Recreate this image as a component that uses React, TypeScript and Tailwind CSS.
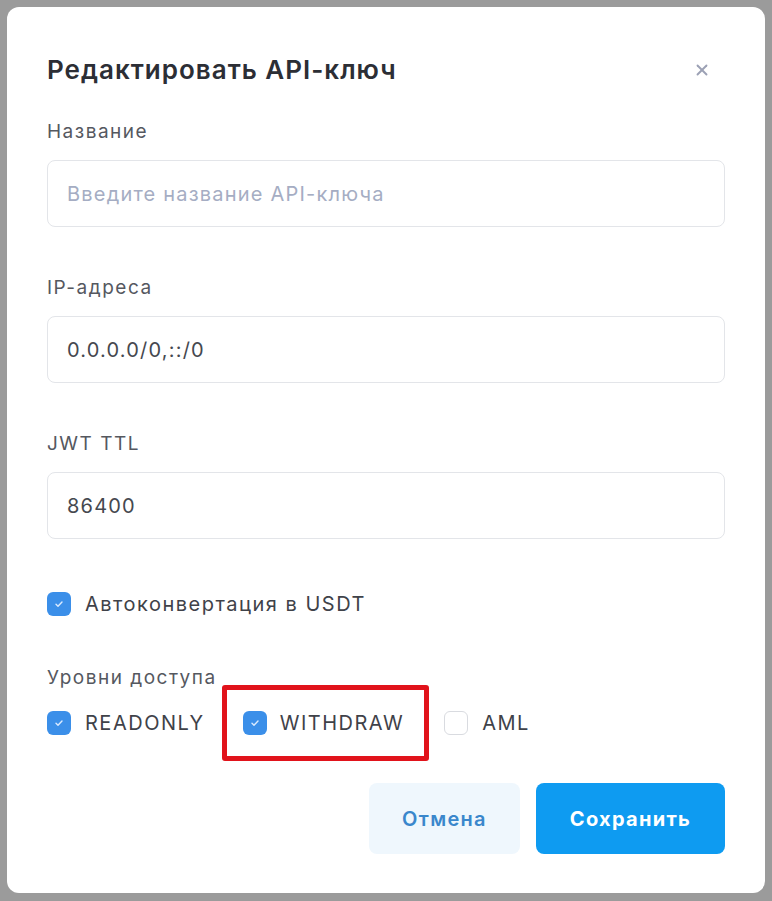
import { X } from 'lucide-react';

function Check({ checked }: { checked: boolean }) {
  return checked ? (
    <span className="flex h-6 w-6 shrink-0 items-center justify-center rounded-[6px] bg-[#3b8fe9]">
      <svg width="12" height="12" viewBox="0 0 12 12" fill="none">
        <path d="M3 6.3l2 2 4-4.3" stroke="#dbeafe" strokeWidth="1.4" strokeLinecap="round" strokeLinejoin="round" />
      </svg>
    </span>
  ) : (
    <span className="h-6 w-6 shrink-0 rounded-[6px] border border-[#d9dbe0] bg-white" />
  );
}

function Field({ label, value, placeholder }: { label: string; value?: string; placeholder?: string }) {
  return (
    <div className="flex flex-col gap-4">
      <label className="text-[19px] leading-6 tracking-[1.5px] text-[#55585f]">{label}</label>
      <input
        defaultValue={value}
        placeholder={placeholder}
        className="h-[67px] w-full rounded-[8px] border border-[#e3e5e9] bg-white px-[19px] text-[20px] tracking-[1.2px] text-[#45484f] placeholder:text-[#a5adc3] focus:outline-none"
      />
    </div>
  );
}

export default function App() {
  return (
    <div className="min-h-[901px] bg-[#9b9b9b] p-[7px] font-['Inter',sans-serif]">
      <div className="flex h-[886px] w-[758px] flex-col rounded-[12px] bg-white px-10 pt-[47px] pb-[39px]">
        <div className="flex items-center justify-between">
          <h2 className="text-[26px] font-semibold leading-8 tracking-[1px] text-[#2c2e35]">Редактировать API-ключ</h2>
          <X className="mr-[14px] h-[18px] w-[18px] text-[#9ca1b5]" strokeWidth={2.5} />
        </div>

        <div className="mt-[34px] flex flex-col gap-[49px]">
          <Field label="Название" placeholder="Введите название API-ключа" />
          <Field label="IP-адреса" value="0.0.0.0/0,::/0" />
          <Field label="JWT TTL" value="86400" />
        </div>

        <div className="mt-[53px] flex items-center gap-[14px]">
          <Check checked />
          <span className="text-[20px] leading-6 tracking-[1.5px] text-[#3f4249]">Автоконвертация в USDT</span>
        </div>

        <div className="mt-[50px] text-[19px] leading-6 tracking-[1.5px] text-[#55585f]">Уровни доступа</div>

        <div className="mt-[21px] flex items-center">
          <div className="flex items-center gap-[14px]">
            <Check checked />
            <span className="text-[20px] leading-6 tracking-[1.5px] text-[#3f4249]">READONLY</span>
          </div>
          <div className="-my-[26px] ml-[17px] flex items-center gap-[13px] rounded-[3px] border-[5px] border-[#e1131b] py-[21px] pr-[20px] pl-[16px]">
            <Check checked />
            <span className="text-[20px] leading-6 tracking-[1.5px] text-[#3f4249]">WITHDRAW</span>
          </div>
          <div className="ml-[15px] flex items-center gap-[14px]">
            <Check checked={false} />
            <span className="text-[20px] leading-6 tracking-[1.5px] text-[#3f4249]">AML</span>
          </div>
        </div>

        <div className="mt-auto flex justify-end gap-4">
          <button className="h-[71px] w-[151px] rounded-[8px] bg-[#eff7fd] text-[20px] font-semibold tracking-[1.3px] text-[#3a87cc]">
            Отмена
          </button>
          <button className="h-[71px] w-[189px] rounded-[8px] bg-[#0e9bf1] text-[20px] font-bold tracking-[1.3px] text-white">
            Сохранить
          </button>
        </div>
      </div>
    </div>
  );
}
